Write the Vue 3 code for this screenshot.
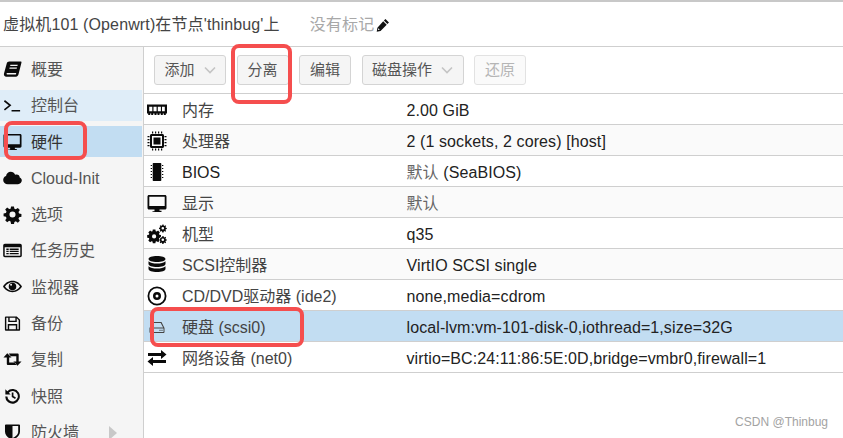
<script setup>
const icons = {
  book: { d: 'M6.500 1.500h12c.8 0 1.100.6.900 1.300l-3 11.900c-.3 1.500-1.200 2.800-2.800 2.800H3.500c-1.800 0-2.800-1.200-2.500-3L4 3.500C4.300 2.300 5.300 1.500 6.500 1.500zM7.800 5l-.3 1.200h7.700l.3-1.200zM7 8l-.3 1.200h7.700l.3-1.200zM4.400 13.600c-.4 0-.7.4-.7.9 0 .4.300.8.800.8h9c.2-.6.3-1.100.5-1.700z' },
  term: { s: 'M1.500 5l6 4.800-6 4.800M9 15.500h9' },
  monitor: { d: 'M2 2h16c.9 0 1.500.6 1.500 1.500v11.500c0 .8-.6 1.500-1.500 1.500h-5.500v1.300h2V19h-9v-.7h2V16.500H2c-.9 0-1.500-.7-1.500-1.500V3.500C.5 2.600 1.100 2 2 2zM2.300 3.800v9.200h15.400V3.800z' },
  cloud: { d: 'M5 17c-2.600 0-4.800-1.900-4.800-4.500 0-2 1.200-3.600 3-4.200C3.600 5.800 5.700 4 8 4c2.200 0 4 1.300 4.800 3.200.5-.3 1.100-.4 1.600-.4 1.800 0 3.200 1.400 3.200 3.100 1.300.6 2.200 1.700 2.200 3.100 0 2.200-1.800 4-4 4z' },
  gear: { d: 'M8.500 1.500h3l.5 2.500 1.500.6 2.100-1.400 2.100 2.100-1.400 2.100.6 1.500 2.500.5v3l-2.500.5-.6 1.500 1.400 2.100-2.100 2.100-2.100-1.400-1.500.6-.5 2.500h-3L8 17.300l-1.500-.6-2.100 1.400-2.100-2.100 1.400-2.100-.6-1.500-2.500-.5v-3l2.500-.5.6-1.500-1.400-2.100 2.100-2.100 2.100 1.400L8 4zM10 6.800a3.200 3.200 0 1 0 0 6.400 3.200 3.200 0 0 0 0-6.400z' },
  list: { d: 'M2 3h16c1 0 1.800.8 1.800 1.800v10.400c0 1-.8 1.800-1.800 1.800H2c-1 0-1.800-.8-1.800-1.800V4.800C.2 3.800 1 3 2 3zM1.800 6.500v8.700c0 .2.100.3.200.3h16c.1 0 .2-.1.200-.3V6.500zM3.500 8h2.500v1.400H3.500zM7 8h9.500v1.400H7zM3.500 10.300h2.500v1.400H3.500zM7 10.300h9.500v1.400H7zM3.500 12.600h2.500V14H3.500zM7 12.600h9.500V14H7z' },
  eye: { d: 'M10 4c4.300 0 8 2.500 10 6-2 3.500-5.700 6-10 6S2 13.500 0 10c2-3.500 5.700-6 10-6zM10 5.500c-3.300 0-6.200 1.800-7.900 4.500 1.700 2.700 4.600 4.500 7.900 4.500s6.200-1.800 7.900-4.500C16.200 7.300 13.300 5.500 10 5.500zM10 6a4 4 0 1 1 0 8 4 4 0 0 1 0-8zM8.500 7.200a1 1 0 1 0 0 2 1 1 0 0 0 0-2z' },
  save: { d: 'M3 2.500h11.500L18 6v10.500c0 .6-.5 1-1 1H3c-.6 0-1-.4-1-1v-13c0-.6.4-1 1-1zM3.500 4v12h1.500v-5.500h10V16h1.500V6.700L14.500 4.600V8.500h-9V4zM7 4v3h6V4zM6.500 12v4h7v-4z' },
  retweet: { d: 'M4.500 3.500L9 8H6.500v5.200h6l2.200 2.600H5c-.6 0-1-.4-1-1V8H.500zM6 3.800h9.500c.6 0 1 .4 1 1V12h3l-4.300 4.500-4.300-4.500H14V6.500H8.200z' },
  history: { d: 'M2.500 3.500l2 2A7.700 7.700 0 1 1 2.300 11H4.600a5.500 5.500 0 1 0 1.500-4l2 2H2.500zM9.200 6.800h1.800V10.600l2.600 1.500-.9 1.500-3.500-2.100z' },
  shield: { d: 'M3 2.500h14c.5 0 .9.400.9.900V10c0 4.600-4.500 7.500-7.900 9-3.400-1.500-7.900-4.400-7.900-9V3.400c0-.5.400-.9.900-.9zM10 4.300v12.700c2.600-1.300 6-3.500 6-7V4.300z' },
  ram: { d: 'M0 4.500h20v9h-1.200v1.500h-2v-1.500h-1v1.500h-2v-1.500h-1.300v1.500h-2v-1.500h-1v1.500h-2v-1.500H6.200v1.500h-2v-1.500H3.200v1.500h-2v-1.500H0zM2.200 6.800v4.500h3.100V6.800zM6.500 6.800v4.500h3.100V6.800zM10.800 6.800v4.500h3.100V6.800zM15 6.800v4.500h2.800V6.800z' },
  cpu: { d: 'M4.500 3h11c.8 0 1.500.7 1.500 1.500v11c0 .8-.7 1.500-1.500 1.500h-11c-.8 0-1.500-.7-1.500-1.500v-11C3 3.700 3.700 3 4.500 3zM5 5v10h10V5zM6.500 6.500h7v7h-7zM5 .5h1.200V2.500H5zM8 .5h1.200V2.500H8zM11 .5h1.200V2.500H11zM14 .5h1.200V2.500H14zM5 17.500h1.200v2H5zM8 17.500h1.200v2H8zM11 17.500h1.200v2H11zM14 17.500h1.200v2H14zM.5 5h2v1.200h-2zM.5 8h2v1.200h-2zM.5 11h2v1.200h-2zM.5 14h2v1.200h-2zM17.500 5h2v1.200h-2zM17.500 8h2v1.200h-2zM17.500 11h2v1.200h-2zM17.500 14h2v1.200h-2z' },
  chip: { d: 'M6.500 1h7c.5 0 .8.300.8.800v16.400c0 .5-.3.800-.8.800h-7c-.5 0-.8-.3-.8-.8V1.800c0-.5.300-.8.800-.8zM3.700 3h1.300v1.100H3.700zM3.700 6h1.300v1.100H3.700zM3.700 9h1.300v1.100H3.700zM3.700 12h1.300v1.100H3.700zM3.700 15h1.300v1.100H3.700zM15 3h1.300v1.100H15zM15 6h1.300v1.100H15zM15 9h1.300v1.100H15zM15 12h1.300v1.100H15zM15 15h1.300v1.100H15z' },
  cogs: { d: 'M5.800 5.500h2.600l.3 1.700 1 .4 1.400-1 1.800 1.800-1 1.400.4 1 1.700.3v2.600l-1.700.3-.4 1 1 1.400-1.800 1.800-1.400-1-1 .4-.3 1.700H5.800l-.3-1.700-1-.4-1.400 1-1.800-1.800 1-1.400-.4-1-1.700-.3v-2.600l1.700-.3.4-1-1-1.400 1.800-1.800 1.400 1 1-.4zM7.100 10.300a2.100 2.100 0 1 0 0 4.200 2.100 2.100 0 0 0 0-4.200zM15.500 .5l1 .1.200 1 .8.300.8-.6.800.8-.6.800.3.800 1 .2v1.200l-1 .2-.3.800.6.800-.8.800-.8-.6-.8.3-.2 1h-1.200l-.2-1-.8-.3-.8.6-.8-.8.6-.8-.3-.8-1-.2V3.800l1-.2.3-.8-.6-.8.8-.8.8.6.8-.3zM15.800 3a1.300 1.300 0 1 0 0 2.600 1.300 1.300 0 0 0 0-2.600zM15.500 12l1 .1.200 1 .8.300.8-.6.800.8-.6.800.3.800 1 .2v1.200l-1 .2-.3.800.6.800-.8.800-.8-.6-.8.3-.2 1h-1.200l-.2-1-.8-.3-.8.6-.8-.8.6-.8-.3-.8-1-.2v-1.200l1-.2.300-.8-.6-.8.8-.8.8.6.8-.3zM15.800 14.500a1.300 1.300 0 1 0 0 2.600 1.300 1.300 0 0 0 0-2.600z' },
  db: { d: 'M10 1c4.700 0 8.500 1.300 8.500 3S14.700 7 10 7 1.500 5.700 1.500 4 5.300 1 10 1zM1.500 6.200C3 7.900 6.500 8.500 10 8.500s7-.6 8.500-2.300v2.800c0 1.700-3.800 3-8.500 3s-8.500-1.300-8.500-3zM1.500 11.200c1.500 1.700 5 2.300 8.500 2.300s7-.6 8.500-2.300V14c0 1.700-3.800 3-8.500 3s-8.500-1.300-8.500-3z' },
  disc: { d: 'M10 .5a9.500 9.500 0 1 1 0 19 9.500 9.500 0 0 1 0-19zM10 2.300a7.700 7.700 0 1 0 0 15.400 7.700 7.700 0 0 0 0-15.400zM10 6a4 4 0 1 1 0 8 4 4 0 0 1 0-8zM10 8.500a1.500 1.500 0 1 0 0 3 1.500 1.500 0 0 0 0-3z' },
  hdd: { d: 'M5.500 5h9l3 6v4c0 .5-.4 1-1 1h-13c-.6 0-1-.5-1-1v-4zM6.300 6L3.900 10.500h12.200L13.700 6zM3.500 11.500v3.500h13v-3.500zM12.500 12.700h1v1.200h-1zM14.500 12.700h1v1.200h-1z' },
  exchange: { d: 'M14 2l5.500 4.500L14 11V8H1V5h13zM6 9l.0 3H19v3H6v3L.5 13.500z' },
  pencil: { d: 'M13.500 1.500l5 5-2.200 2.200-5-5zM10.300 4.700l5 5L6.500 18.500 1 19.500l1-5.500zM3.500 14.700l-.7 2.500 2.500-.5z' },
}
const nav = [
  { t: '概要', i: 'book' },
  { t: '控制台', i: 'term', c: 'hover' },
  { t: '硬件', i: 'monitor', c: 'active' },
  { t: 'Cloud-Init', i: 'cloud' },
  { t: '选项', i: 'gear' },
  { t: '任务历史', i: 'list' },
  { t: '监视器', i: 'eye' },
  { t: '备份', i: 'save' },
  { t: '复制', i: 'retweet' },
  { t: '快照', i: 'history' },
  { t: '防火墙', i: 'shield', arrow: true },
]
const rows = [
  { i: 'ram', k: '内存', v: '2.00 GiB' },
  { i: 'cpu', k: '处理器', v: '2 (1 sockets, 2 cores) [host]' },
  { i: 'chip', k: 'BIOS', v: ' (SeaBIOS)', z: '默认', dark: true },
  { i: 'monitor', k: '显示', v: '', z: '默认' },
  { i: 'cogs', k: '机型', v: 'q35' },
  { i: 'db', k: 'SCSI控制器', v: 'VirtIO SCSI single' },
  { i: 'disc', k: 'CD/DVD驱动器 (ide2)', v: 'none,media=cdrom' },
  { i: 'hdd', k: '硬盘 (scsi0)', v: 'local-lvm:vm-101-disk-0,iothread=1,size=32G', sel: true },
  { i: 'exchange', k: '网络设备 (net0)', v: 'virtio=BC:24:11:86:5E:0D,bridge=vmbr0,firewall=1' },
]
</script>

<template>
  <div class="page">
    <header class="head">
      <span class="title">虚拟机101 (Openwrt)在节点'thinbug'上</span>
      <span class="tags">没有标记</span>
      <svg class="pen" viewBox="0 0 20 20"><path :d="icons.pencil.d" fill-rule="evenodd" /></svg>
    </header>
    <div class="body">
      <nav class="side">
        <div v-for="n in nav" :key="n.t" class="nav" :class="n.c">
          <svg class="nicon" viewBox="0 0 20 20">
            <path v-if="icons[n.i].d" :d="icons[n.i].d" fill-rule="evenodd" />
            <path v-else :d="icons[n.i].s" class="stroke" />
          </svg>
          <span>{{ n.t }}</span>
          <i v-if="n.arrow" class="arrow"></i>
        </div>
      </nav>
      <main class="main">
        <div class="bar">
          <button class="btn w72">添加<svg class="chev" viewBox="0 0 12 8"><path d="M1 1.500l5 5 5-5" /></svg></button>
          <button class="btn">分离</button>
          <button class="btn">编辑</button>
          <button class="btn w102">磁盘操作<svg class="chev" viewBox="0 0 12 8"><path d="M1 1.500l5 5 5-5" /></svg></button>
          <button class="btn off">还原</button>
        </div>
        <div v-for="r in rows" :key="r.k" class="row" :class="{ sel: r.sel }">
          <svg class="ricon" :class="{ faint: r.i === 'hdd' }" viewBox="0 0 20 20"><path :d="icons[r.i].d" fill-rule="evenodd" /></svg>
          <span class="key" :class="{ dark: r.dark }">{{ r.k }}</span>
          <span class="val"><span v-if="r.z" class="zh">{{ r.z }}</span>{{ r.v }}</span>
        </div>
      </main>
    </div>
    <div class="mark m1"></div>
    <div class="mark m2"></div>
    <div class="mark m3"></div>
    <div class="wm">CSDN @Thinbug</div>
  </div>
</template>

<style scoped>
.page {
  position: relative;
  width: 843px;
  height: 438px;
  overflow: hidden;
  background: #fff;
  border-top: 2px solid #c8c8c8;
  box-sizing: border-box;
  font: 16px/20px "Liberation Sans", "Noto Sans CJK SC", sans-serif;
  color: #333;
}
.head {
  height: 45px;
  box-sizing: border-box;
  border-bottom: 1px solid #cfcfcf;
  display: flex;
  align-items: center;
  padding: 1px 0 0 3px;
}
.title { color: #444; letter-spacing: .13px; }
.tags { color: #a8a8a8; margin-left: 30px; letter-spacing: .2px; }
.pen { width: 14px; height: 14px; margin-left: 2px; fill: #111; }
.body { display: flex; height: 391px; }
.side {
  width: 144px;
  flex: none;
  box-sizing: border-box;
  background: #f5f5f5;
  border-right: 1px solid #cfcfcf;
  padding-right: 1px;
  padding-top: 6.5px;
}
.nav {
  height: 31px;
  margin-bottom: 5.3px;
  display: flex;
  align-items: center;
  padding: 2px 0 0 3px;
  box-sizing: border-box;
  color: #555;
}
.nav.hover { background: #dfedf8; }
.nav.active { background: #c2ddf2; color: #333; }
.nicon { width: 19px; height: 19px; flex: none; margin-right: 9px; margin-top: -2px; fill: #0a0a0a; }
.stroke { fill: none; stroke: #0a0a0a; stroke-width: 1.700; }
.arrow {
  margin-left: 30px;
  width: 0;
  height: 0;
  border-left: 8px solid #c8c8c8;
  border-top: 7px solid transparent;
  border-bottom: 7px solid transparent;
}
.main { flex: 1; min-width: 0; }
.bar {
  height: 47px;
  box-sizing: border-box;
  border-bottom: 1px solid #cfcfcf;
  display: flex;
  gap: 10.5px;
  padding: 8px 0 0 10px;
}
.btn {
  width: 52px;
  height: 30px;
  box-sizing: border-box;
  padding: 0;
  border: 1px solid #d4d4d4;
  border-radius: 3px;
  background: #f5f5f5;
  font: inherit;
  font-size: 15px;
  color: #555;
  display: flex;
  align-items: center;
  justify-content: center;
}
.w72 { width: 72px; }
.w102 { width: 102px; }
.off { color: #b5b5b5; background: #fafafa; border-color: #e2e2e2; }
.chev { width: 12px; height: 8px; margin-left: 9px; fill: none; stroke: #c4c4c4; stroke-width: 1.600; }
.row {
  height: 31px;
  box-sizing: border-box;
  border-bottom: 1px solid #cfcfcf;
  display: flex;
  align-items: center;
  padding: 3px 0 0 3px;
}
.row:nth-child(odd) { background: #fafafa; }
.row.sel { background: #c2ddf2; }
.ricon { width: 20px; height: 20px; flex: none; fill: #0a0a0a; margin-top: -2px; }
.ricon.faint { fill: #444; }
.key { width: 224.500px; flex: none; margin-left: 15px; white-space: nowrap; color: #444; }
.key.dark { color: #222; }
.val { white-space: pre; color: #222; letter-spacing: .1px; }
.zh { color: #666; }
.mark {
  position: absolute;
  box-sizing: border-box;
  border: 4px solid #f54e4e;
  border-radius: 8px;
}
.m1 { left: 231px; top: 42px; width: 61px; height: 60px; }
.m2 { left: 4px; top: 119px; width: 83px; height: 39px; }
.m3 { left: 150px; top: 305px; width: 154px; height: 40px; }
.wm {
  position: absolute;
  right: 15px;
  top: 410px;
  font-size: 12px;
  color: #a3a3a3;
}
</style>
